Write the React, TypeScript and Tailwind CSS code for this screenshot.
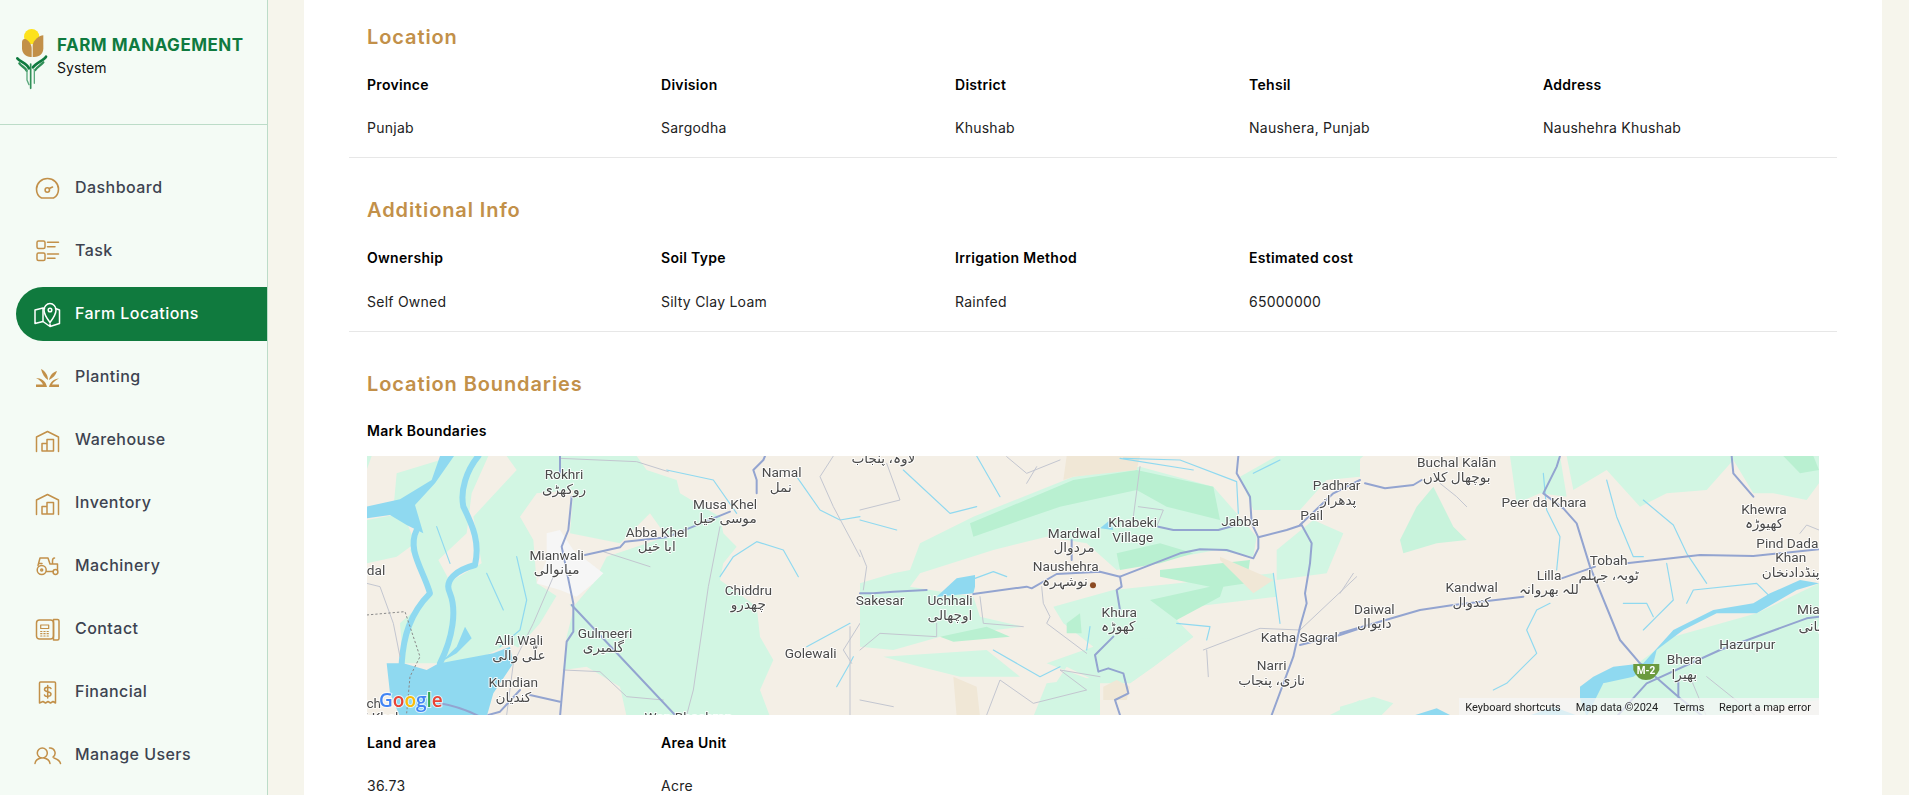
import React from "react";

const BR = "#c29049";
type Lb = [number, number, string];
type Grp = { tx: number; fills: [string, string][]; water?: string[]; fat?: string[]; thin?: string[]; roads?: string[]; labels: Lb[] };
const LG = "#d2f6e3", MG = "#b9f0d1", DB = "#f0e7d6", WT = "#8fd9f0", BG = "#f4efe6";

const groups: Grp[] = [
  {
    tx: -7,
    fills: [
      ["M110 70 L280 18 L830 18 L860 60 L950 90 L960 130 L1010 160 L1080 200 L1090 250 L1130 290 L1090 340 L1080 390 L1190 470 L1200 560 L1240 630 L1200 720 L1230 800 L640 800 L560 640 L450 580 L330 640 L130 640 L120 520 L220 430 L150 300 L180 240 L100 180Z", LG],
      ["M20 18 L35 18 L20 60Z", LG],
      ["M20 210 L130 190 L165 280 L110 320 L20 340Z", LG],
      ["M450 620 L540 520 L600 420 L640 480 L620 560 L610 660 L680 650 L780 710 L800 800 L440 800Z", BG],
      ["M480 200 L530 130 L640 120 L630 250 L780 280 L870 190 L920 260 L740 320 L700 400 L640 470 L530 400 L520 270Z", BG],
      ["M335 130 L385 18 L440 18 L470 60 L340 200 L365 340 L270 395 L235 330 L320 250Z", BG],
      ["M560 250 L600 240 L640 300 L730 370 L700 400 L650 440 L600 420 L530 400 L560 330Z", "#f6f6f6"],
      ["M20 170 L120 148 L215 90 L240 18 L282 18 L225 100 L165 165 L190 250 L140 225 L90 195 L20 205Z", WT],
      ["M80 640 L130 640 L200 660 L290 610 L335 565 L315 530 L290 590 L240 640 L400 610 L450 590 L460 640 L400 730 L380 800 L120 800 L90 730Z", WT],
    ],
    fat: [
      "M170 240 C140 300 190 360 210 430 C150 490 130 560 125 640",
      "M355 18 C320 60 300 120 310 170 C340 230 360 280 345 345 C290 360 250 390 270 430 C290 480 280 560 240 640",
    ],
    water: ["M1080 380 L1120 320 L1190 275 L1270 300 L1315 380", "M920 60 L1060 90 L1130 190", "M1310 80 L1380 180 L1440 210 L1500 200", "M1340 590 L1470 520", "M1430 710 L1470 640 L1480 620", "M230 230 L270 340", "M470 320 L500 450 L480 540 L420 590", "M380 370 L430 480"],
    thin: ["M1080 230 L1045 410 L1000 720 L980 795", "M730 305 L870 350", "M600 25 L830 35 L925 65", "M610 660 L720 665 L800 740 L910 750", "M1420 18 L1380 80 L1420 170 L1500 320", "M580 380 L520 520 L460 640 L440 795", "M20 400 L60 410 L100 520 L120 620", "M1470 530 L1470 795", "M1500 520 L1450 600 L1475 640"],
    roads: ["M600 18 L600 70", "M635 140 L625 240 L605 290 L640 460 L640 545 L620 575 L600 800", "M675 315 L780 292 L795 275 L920 262 L1110 185", "M1190 130 L1190 90 L1180 60 L1210 30 L1215 18", "M635 465 L945 795", "M510 735 L600 755", "M240 760 C300 770 350 795 360 800", "M385 795 L420 785 L480 720"],
    labels: [[612,72,"Rokhri"],[612,116,"روکھڑی"],[1095,162,"Musa Khel"],[1095,205,"موسی خیل"],[1265,66,"Namal"],[1262,110,"نمل"],[890,245,"Abba Khel"],[890,288,"ابا خیل"],[590,314,"Mianwali"],[590,358,"میانوالی"],[48,360,"dal"],[1165,420,"Chiddru"],[1165,462,"چھدرو"],[477,570,"Alli Wali"],[477,615,"علّی والی"],[735,549,"Gulmeeri"],[730,592,"گلمیری"],[1352,610,"Golewali"],[460,697,"Kundian"],[460,740,"کندیان"],[985,800,"Wan Bhachran"],[30,760,"uch"],[65,802,"i Khel"]],
  },
  {
    tx: 493,
    fills: [
      ["M0 400 L100 370 L150 360 L180 280 L340 200 L640 80 L840 50 L1060 110 L1130 190 L1190 260 L1180 320 L1070 300 L960 320 L770 360 L680 280 L560 260 L400 300 L180 370 L150 410 L340 440 L360 500 L490 530 L240 560 L100 600 L0 590Z", LG],
      ["M580 470 L760 420 L1240 370 L1250 440 L1000 470 L950 510 L1000 560 L880 650 L810 700 L720 700 L620 650 L520 800 L720 800 L720 700 L560 640 L700 590 L610 520Z", LG],
      ["M700 570 L1000 560 L880 650 L810 700 L700 690Z", LG],
      ["M70 620 L380 600 L480 680 L300 680 L180 650Z", LG],
      ["M520 800 L560 700 L720 680 L720 800Z", LG],
      ["M1400 800 L1500 750 L1500 800Z", LG],
      ["M1140 80 L1250 18 L1500 18 L1500 80 L1400 90 L1320 180 L1180 180Z", LG],
      ["M1250 300 L1360 210 L1450 250 L1400 370 L1250 390Z", LG],
      ["M330 220 L640 90 L830 60 L1060 110 L1080 210 L920 170 L830 120 L600 170 L340 260Z", MG],
      ["M770 310 L900 280 L1000 310 L900 340 L780 360Z", MG],
      ["M900 360 L1170 330 L1160 400 L1090 410 L1080 440 L950 510 L870 450 L1050 410 L900 380Z", MG],
      ["M620 520 L660 490 L665 550 L620 550Z", MG],
      ["M240 560 L380 530 L450 560 L280 575Z", MG],
      ["M620 18 L840 18 L830 60 L640 80 L610 90Z", DB],
      ["M280 680 L350 710 L360 800 L290 800Z", DB],
      ["M730 710 L770 690 L810 710 L800 750 L730 750Z", DB],
      ["M1080 320 L1240 390 L1180 430 L1080 330Z", DB],
      ["M230 440 L290 385 L345 375 L345 410 L340 430Z", WT],
      ["M720 235 L750 210 L760 240Z", WT],
    ],
    water: ["M345 385 L400 365 L440 380", "M350 18 L420 140", "M130 60 L270 190 L350 170", "M0 210 L110 240", "M1240 370 L1260 520", "M950 520 L1050 530 L1040 570", "M690 530 L680 600", "M790 25 L960 30 L1130 95 L1135 190", "M780 25 L1000 60", "M1180 70 L1260 30", "M400 600 L540 680 L600 650"],
    thin: ["M545 410 L550 460 L570 500 L560 520 L680 610", "M360 440 L370 520 L490 530", "M230 520 L230 560 L60 550 L0 600", "M1030 600 L1200 535 L1320 540 L1490 380", "M1040 600 L1045 680", "M840 50 L820 200", "M835 170 L910 180 L890 230", "M0 180 L120 150 L80 40", "M440 20 L500 70 L600 30", "M500 100 L530 50", "M720 680 L600 660 L680 720 L520 760 L420 690 L380 795", "M0 750 L100 770", "M0 300 L20 350 L10 420"],
    roads: ["M0 430 L40 430 L100 425 L200 420", "M340 432 L500 410 L515 415 L590 372 L720 365 L780 380 L960 310 L1020 298 L1100 300 L1180 325 L1195 295 L1195 262 L1280 240 L1325 225 L1355 280 L1350 340 L1335 430 L1340 460 L1320 530 L1300 620 L1235 795", "M1135 18 L1130 70 L1170 140 L1175 220 L1195 262", "M895 230 L940 240 L1075 240 L1130 225", "M780 380 L785 410 L770 420 L780 480", "M760 560 L705 615 L715 665 L745 655 L790 670 L805 730 L765 750 L780 795", "M1320 225 L1420 130 L1500 90", "M1320 585 L1440 555 L1500 535", "M635 270 L635 330"],
    labels: [[70,25,"لاوہ، پنجاب"],[1430,105,"Padhrar"],[1435,150,"پدھراز"],[1355,195,"Pail"],[1140,212,"Jabba"],[818,217,"Khabeki"],[818,260,"Village"],[642,248,"Mardwal"],[642,292,"مردوال"],[617,349,"Naushehra"],[615,393,"نوشہرہ"],[60,451,"Sakesar"],[270,450,"Uchhali"],[270,494,"اوچھالی"],[778,486,"Khura"],[775,527,"کھوڑہ"],[1318,560,"Katha Sagral"],[1235,646,"Narri"],[1235,690,"نازی، پنجاب"]],
  },
  {
    tx: 973,
    fills: [
      ["M510 18 L660 18 L680 140 L600 130 L530 160Z", LG],
      ["M680 18 L1437 18 L1437 100 L1400 150 L1300 130 L1240 130 L1180 30 L1100 120 L980 130 L900 170 L800 60 L700 120Z", LG],
      ["M230 170 L280 110 L340 230 L380 270 L290 280 L190 310 L180 270Z", "#c8f3dc"],
      ["M0 18 L70 18 L0 80Z", LG],
      ["M1330 18 L1420 18 L1437 60 L1380 70Z", MG],
      ["M720 740 L880 650 L1000 560 L1250 490 L1437 400 L1437 750 L1100 800 L720 800Z", LG],
      ["M0 800 L0 770 L100 740 L160 760 L120 800Z", LG],
      ["M720 745 L720 710 L760 680 L820 650 L910 640 L1000 540 L1120 480 L1240 460 L1290 430 L1380 390 L1437 400 L1370 420 L1250 490 L1130 490 L1030 540 L950 600 L940 640 L880 680 L790 700 L740 800Z", WT],
      ["M210 800 L290 775 L340 800Z", WT],
      ["M560 800 L640 770 L720 800Z", WT],
    ],
    water: ["M910 150 L1000 225 L1040 310 L1100 400", "M800 90 L830 200 L880 320 L910 320", "M980 340 L1000 450 L950 500 L910 540", "M1040 460 L1060 420 L1250 400 L1290 440", "M850 460 L920 460 L940 500", "M610 70 L620 180 L660 260 L650 360", "M630 460 L590 480 L560 540 L590 610 L500 700 L460 720"],
    thin: ["M1380 250 L1400 225 L1437 240", "M300 100 L350 140 L380 170", "M0 430 L40 370", "M1050 680 L1100 800", "M1100 680 L1250 800"],
    roads: ["M660 18 L650 50 L610 130 L670 175 L710 220 L750 350 L840 570 L900 640 L1020 745 L1090 800", "M75 100 L135 115 L220 105 L245 90", "M0 550 L240 480 L340 465 L550 440", "M665 385 L765 350", "M860 340 L1080 315 L1240 318 L1437 298", "M1175 18 L1180 70 L1240 140", "M830 800 L920 700 L1140 600 L1400 505 L1437 500", "M1015 690 L1015 740"],
    labels: [[350,37,"Buchal Kalān"],[350,80,"بوچھال کلاں"],[612,155,"Peer da Khara"],[1272,178,"Khewra"],[1272,220,"کھیوڑہ"],[1342,280,"Pind Dada"],[1352,322,"Khan"],[1352,365,"پنڈدادنخان"],[806,331,"Tobah"],[806,376,"ٹوبہ، جہلم"],[627,374,"Lilla"],[627,418,"للہ بھروانہ"],[395,412,"Kandwal"],[395,455,"کندوال"],[103,478,"Daiwal"],[103,520,"دایوال"],[1405,478,"Mia"],[1410,528,"بانی"],[1222,583,"Hazurpur"],[1033,627,"Bhera"],[1033,672,"بھیرا"]],
  },
];

function MapView() {
  const k = 1 / 3;
  return (
    <svg viewBox="0 -1 1452 259" className="block h-[259px] w-[1452px] bg-[#f4efe6] blur-[0.35px]" fontFamily="Roboto, 'DejaVu Sans', sans-serif">
      {groups.map((g, i) => (
        <g key={i} transform={`translate(${g.tx},-7) scale(${k})`} fill="none" strokeLinejoin="round" strokeLinecap="round">
          {g.fills.map(([d, c], j) => <path key={j} d={d} fill={c} />)}
          {g.fat?.map((d, j) => <path key={j} d={d} stroke={WT} strokeWidth={18} />)}
          {g.water?.map((d, j) => <path key={j} d={d} stroke={WT} strokeWidth={3.5} />)}
          {g.thin?.map((d, j) => <path key={j} d={d} stroke="#c3c6d0" strokeWidth={3} />)}
          {g.roads?.map((d, j) => <path key={j} d={d} stroke="#93a4d0" strokeWidth={6} />)}
        </g>
      ))}
      <g transform="translate(-7,-7) scale(0.3333)">
        <path d="M20 495 L135 485 L180 620 L150 680 L140 790" fill="none" stroke="#8a8a8a" strokeWidth={3} strokeDasharray="7 6" />
      </g>
      <g transform="translate(493,-7) scale(0.3333)"><circle cx={699} cy={406} r={9} fill="#8b4a22" /></g>
      <g transform="translate(973,-7) scale(0.3333)">
        <path d="M880 642 L958 642 L958 660 Q945 690 918 690 Q892 690 880 660Z" fill="#6b9a3e" />
        <text x={918} y={662} textAnchor="middle" dominantBaseline="central" fontSize={30} fontWeight={700} fill="#fff">M-2</text>
      </g>
      {groups.map((g, i) => (
        <g key={i} transform={`translate(${g.tx},-7) scale(${k})`}>
          {g.labels.map(([x, y, t], j) => (
            <text key={j} x={x} y={y} textAnchor="middle" dominantBaseline="central" fontSize={41} fill="#4a4a4a" stroke="#fff" strokeWidth={6} strokeOpacity={0.85} paintOrder="stroke" strokeLinejoin="round">{t}</text>
          ))}
        </g>
      ))}
      <text x={12} y={243} fontSize={19} fontWeight={600} stroke="#fff" strokeWidth={2} strokeOpacity={0.7} paintOrder="stroke" fontFamily="'Open Sans', sans-serif" dominantBaseline="central">
        <tspan fill="#4285f4">G</tspan><tspan fill="#ea4335">o</tspan><tspan fill="#fbbc05">o</tspan><tspan fill="#4285f4">g</tspan><tspan fill="#34a853">l</tspan><tspan fill="#ea4335">e</tspan>
      </text>
      <rect x={1092} y={241} width={360} height={17} fill="#f5f5f5" fillOpacity={0.75} />
      <g fontSize={11} fill="#222" textAnchor="middle" dominantBaseline="central">
        <text x={1146} y={250}>Keyboard shortcuts</text>
        <text x={1250} y={250}>Map data ©2024</text>
        <text x={1322} y={250}>Terms</text>
        <text x={1398} y={250}>Report a map error</text>
      </g>
    </svg>
  );
}

const sw = { fill: "none", stroke: BR, strokeWidth: 1.5, strokeLinecap: "round", strokeLinejoin: "round" } as const;

function Ware() {
  return (
    <g {...sw}>
      <path d="M3.500 27.500 V13 L14.500 7.500 L25.500 13 V27.500" />
      <path d="M9 27 V19.500 H14 M14 27 V15.500 H20.500 V27 M9 27 H20.500" />
    </g>
  );
}

const icons: Record<string, React.ReactNode> = {
  Dashboard: (
    <g {...sw} strokeWidth={1.6}>
      <path d="M8.500 26 C5.500 24.500 3.500 21 3.500 17 A11 10.500 0 0 1 25.500 17 C25.500 21 23.500 24.500 20.500 26 Z" />
      <circle cx={14.300} cy={18} r={2.200} />
      <path d="M16.300 16.500 L19.500 15" />
    </g>
  ),
  Task: (
    <g {...sw}>
      <rect x={4} y={6} width={8} height={7.500} rx={1.500} />
      <rect x={4} y={18} width={8} height={7.500} rx={1.500} />
      <path d="M14.500 7.300 H25.500 M14.500 11.700 H22 M14.500 19 H25.500 M14.500 23.300 H22" />
    </g>
  ),
  "Farm Locations": (
    <g {...sw} stroke="#fff">
      <path d="M11.500 10.500 L10 10 L2 12 V25.500 L10 23.500 L17 28.500 L26.500 25.500 V12 L22.500 10.500 M10 10 V23.500 M17 26 V28.500" />
      <path d="M17 24.500 C13.500 20 11 16.500 11 12 A6 6.500 0 0 1 23 12 C23 16.500 20.500 20 17 24.500 Z" />
      <circle cx={17} cy={12} r={1.800} />
    </g>
  ),
  Planting: (
    <g fill={BR}>
      <path d="M8 8 C12 10 15 14 15 19 C12 17 9 13 8 8Z" />
      <path d="M24 10 C20 11 17 14 16 19 C20 17 23 14 24 10Z" />
      <path d="M3 17 C8 17 13 20 14 26 H3 V23.500 H10 C9 21 6 18.500 3 17Z" />
      <path d="M26 17.500 C21 18 17 21 16 26 H26 V23.500 H19 C20 21 23 19 26 17.500Z" />
    </g>
  ),
  Warehouse: <Ware />,
  Inventory: <Ware />,
  Machinery: (
    <g {...sw}>
      <circle cx={8.700} cy={20} r={4.500} />
      <circle cx={8.700} cy={20} r={1} />
      <circle cx={22.500} cy={22} r={2.400} />
      <path d="M5 15.500 L7 8 H15 L17 14 H24.500 V19.500 M13.500 21.500 H20 M19.500 14 V11 C19.500 9 20.500 8 21.500 8 M5.500 13.500 H9" />
    </g>
  ),
  Contact: (
    <g {...sw}>
      <rect x={3.500} y={7} width={17} height={19} rx={3} />
      <path d="M20.500 6.500 H24.500 A1.500 1.500 0 0 1 26 8 V25.500 A1.500 1.500 0 0 1 24.500 27 H20.500 Z" />
      <rect x={7.700} y={12} width={8} height={3.500} strokeWidth={1.200} />
      <path strokeWidth={1.200} strokeDasharray="1.200 2" d="M7.700 18.500 H16 M7.700 20.700 H16 M7.700 23 H16" />
    </g>
  ),
  Financial: (
    <g {...sw}>
      <path d="M6.500 27 V7 A1 1 0 0 1 7.500 6 H21.500 A1 1 0 0 1 22.500 7 V27 L20 25.500 L17.500 27 L15 25.500 L12.500 27 L10 25.500 Z" />
      <path d="M18 12.500 C17.500 11 11.500 10.500 11.500 13.500 C11.500 16.500 18 15 18 18 C18 21 12 21 11.500 19 M14.700 9.500 V22" />
    </g>
  ),
  "Manage Users": (
    <g {...sw}>
      <circle cx={9.300} cy={14} r={5} />
      <path d="M2 24.500 C2.500 21.500 5.500 19.500 8 19 M17 24.500 C16.500 21.500 13.500 19.500 11 19" />
      <path d="M16.500 9 A5 5 0 0 1 20 18 M21 19 C24 20 27 22 27.500 24.500" />
    </g>
  ),
};

const nav = ["Dashboard", "Task", "Farm Locations", "Planting", "Warehouse", "Inventory", "Machinery", "Contact", "Financial", "Manage Users"];

function Logo() {
  return (
    <svg viewBox="0 0 141 225" className="h-[75px] w-[47px] shrink-0" fill="none" strokeLinecap="round">
      <circle cx={65} cy={50} r={23} fill="#fde21c" />
      <path d="M36 68 C36 58 42 56 48 58 C58 63 65 75 65 85 L65 111 C50 113 36 102 36 85Z" fill={BR} />
      <path d="M100 46 C88 46 71 60 68 75 L68 111 C88 113 100 102 100 85Z" fill={BR} />
      <path d="M22 115 C30 125 50 130 57 145" stroke="#0f7a3f" strokeWidth={8} />
      <path d="M28 130 C35 140 45 142 50 152" stroke="#2f8f57" strokeWidth={7} />
      <path d="M108 110 C100 122 78 128 69 142" stroke="#0f7a3f" strokeWidth={8} />
      <path d="M100 127 C92 137 82 140 76 150" stroke="#2f8f57" strokeWidth={7} />
      <path d="M51 150 L51 180 L57 194" stroke="#5aa87c" strokeWidth={4} />
      <path d="M62 132 L62 205" stroke="#2f8f57" strokeWidth={5} />
      <path d="M73 148 L73 190" stroke="#5aa87c" strokeWidth={4} />
    </svg>
  );
}

function Field({ label, value, gap = "gap-[23px]" }: { label: string; value?: string; gap?: string }) {
  return (
    <div className={`flex flex-col ${gap}`}>
      <div className="text-[14px] leading-5 font-semibold tracking-[0.3px] text-black">{label}</div>
      {value && <div className="text-[14px] leading-5 font-normal tracking-[0.25px] text-[#222]">{value}</div>}
    </div>
  );
}

function Heading({ children }: { children: React.ReactNode }) {
  return <h2 className="h-[30px] text-[20px] leading-[30px] font-semibold tracking-[0.9px] text-[#c29049]">{children}</h2>;
}

const cols = "grid grid-cols-[294px_294px_294px_294px_294px]";

export default function App() {
  return (
    <div className="flex h-[795px] w-[1909px] overflow-hidden bg-[#f6f5ec] font-['Inter',sans-serif]">
      <aside className="flex h-full w-[268px] shrink-0 flex-col border-r border-[#bcdcc8] bg-[#f4fbf5]">
        <div className="flex h-[125px] shrink-0 items-start border-b border-[#bcdcc8] pt-[20px] pl-[10px]">
          <Logo />
          <div className="pt-[14px]">
            <div className="text-[17px] leading-[22px] font-bold tracking-[0.5px] whitespace-nowrap text-[#0f7a3f]">FARM MANAGEMENT</div>
            <div className="mt-[3px] text-[14px] leading-[18px] tracking-[0.1px] text-[#111]">System</div>
          </div>
        </div>
        <nav className="mt-[36px] flex flex-col gap-[9px] pl-[16px]">
          {nav.map((n) => {
            const active = n === "Farm Locations";
            return (
              <div key={n} className={`flex h-[54px] items-center rounded-l-[27px] pb-[3px] pl-[17px] ${active ? "bg-[#107a3e] text-white" : "text-[#3d4350]"}`}>
                <svg viewBox="0 0 30 30" className="h-[30px] w-[30px] shrink-0">{icons[n]}</svg>
                <span className="ml-[12px] text-[16px] font-medium tracking-[0.45px] whitespace-nowrap">{n}</span>
              </div>
            );
          })}
        </nav>
      </aside>
      <main className="ml-[36px] h-full w-[1578px] shrink-0 overflow-hidden bg-white pr-[45px] pl-[45px]">
        <section className="border-b border-[#e7e7e7] pt-[22px] pb-[19px] pl-[18px]">
          <Heading>Location</Heading>
          <div className={`mt-[23px] ${cols}`}>
            <Field label="Province" value="Punjab" />
            <Field label="Division" value="Sargodha" />
            <Field label="District" value="Khushab" />
            <Field label="Tehsil" value="Naushera, Punjab" />
            <Field label="Address" value="Naushehra Khushab" />
          </div>
        </section>
        <section className="border-b border-[#e7e7e7] pt-[37px] pb-[19px] pl-[18px]">
          <Heading>Additional Info</Heading>
          <div className={`mt-[23px] ${cols}`}>
            <Field gap="gap-[24px]" label="Ownership" value="Self Owned" />
            <Field gap="gap-[24px]" label="Soil Type" value="Silty Clay Loam" />
            <Field gap="gap-[24px]" label="Irrigation Method" value="Rainfed" />
            <Field gap="gap-[24px]" label="Estimated cost" value="65000000" />
          </div>
        </section>
        <section className="pt-[37px] pl-[18px]">
          <Heading>Location Boundaries</Heading>
          <div className="mt-[22px]"><Field label="Mark Boundaries" /></div>
          <div className="mt-[15px]"><MapView /></div>
          <div className={`mt-[18px] ${cols}`}>
            <Field label="Land area" value="36.73" />
            <Field label="Area Unit" value="Acre" />
          </div>
        </section>
      </main>
    </div>
  );
}
